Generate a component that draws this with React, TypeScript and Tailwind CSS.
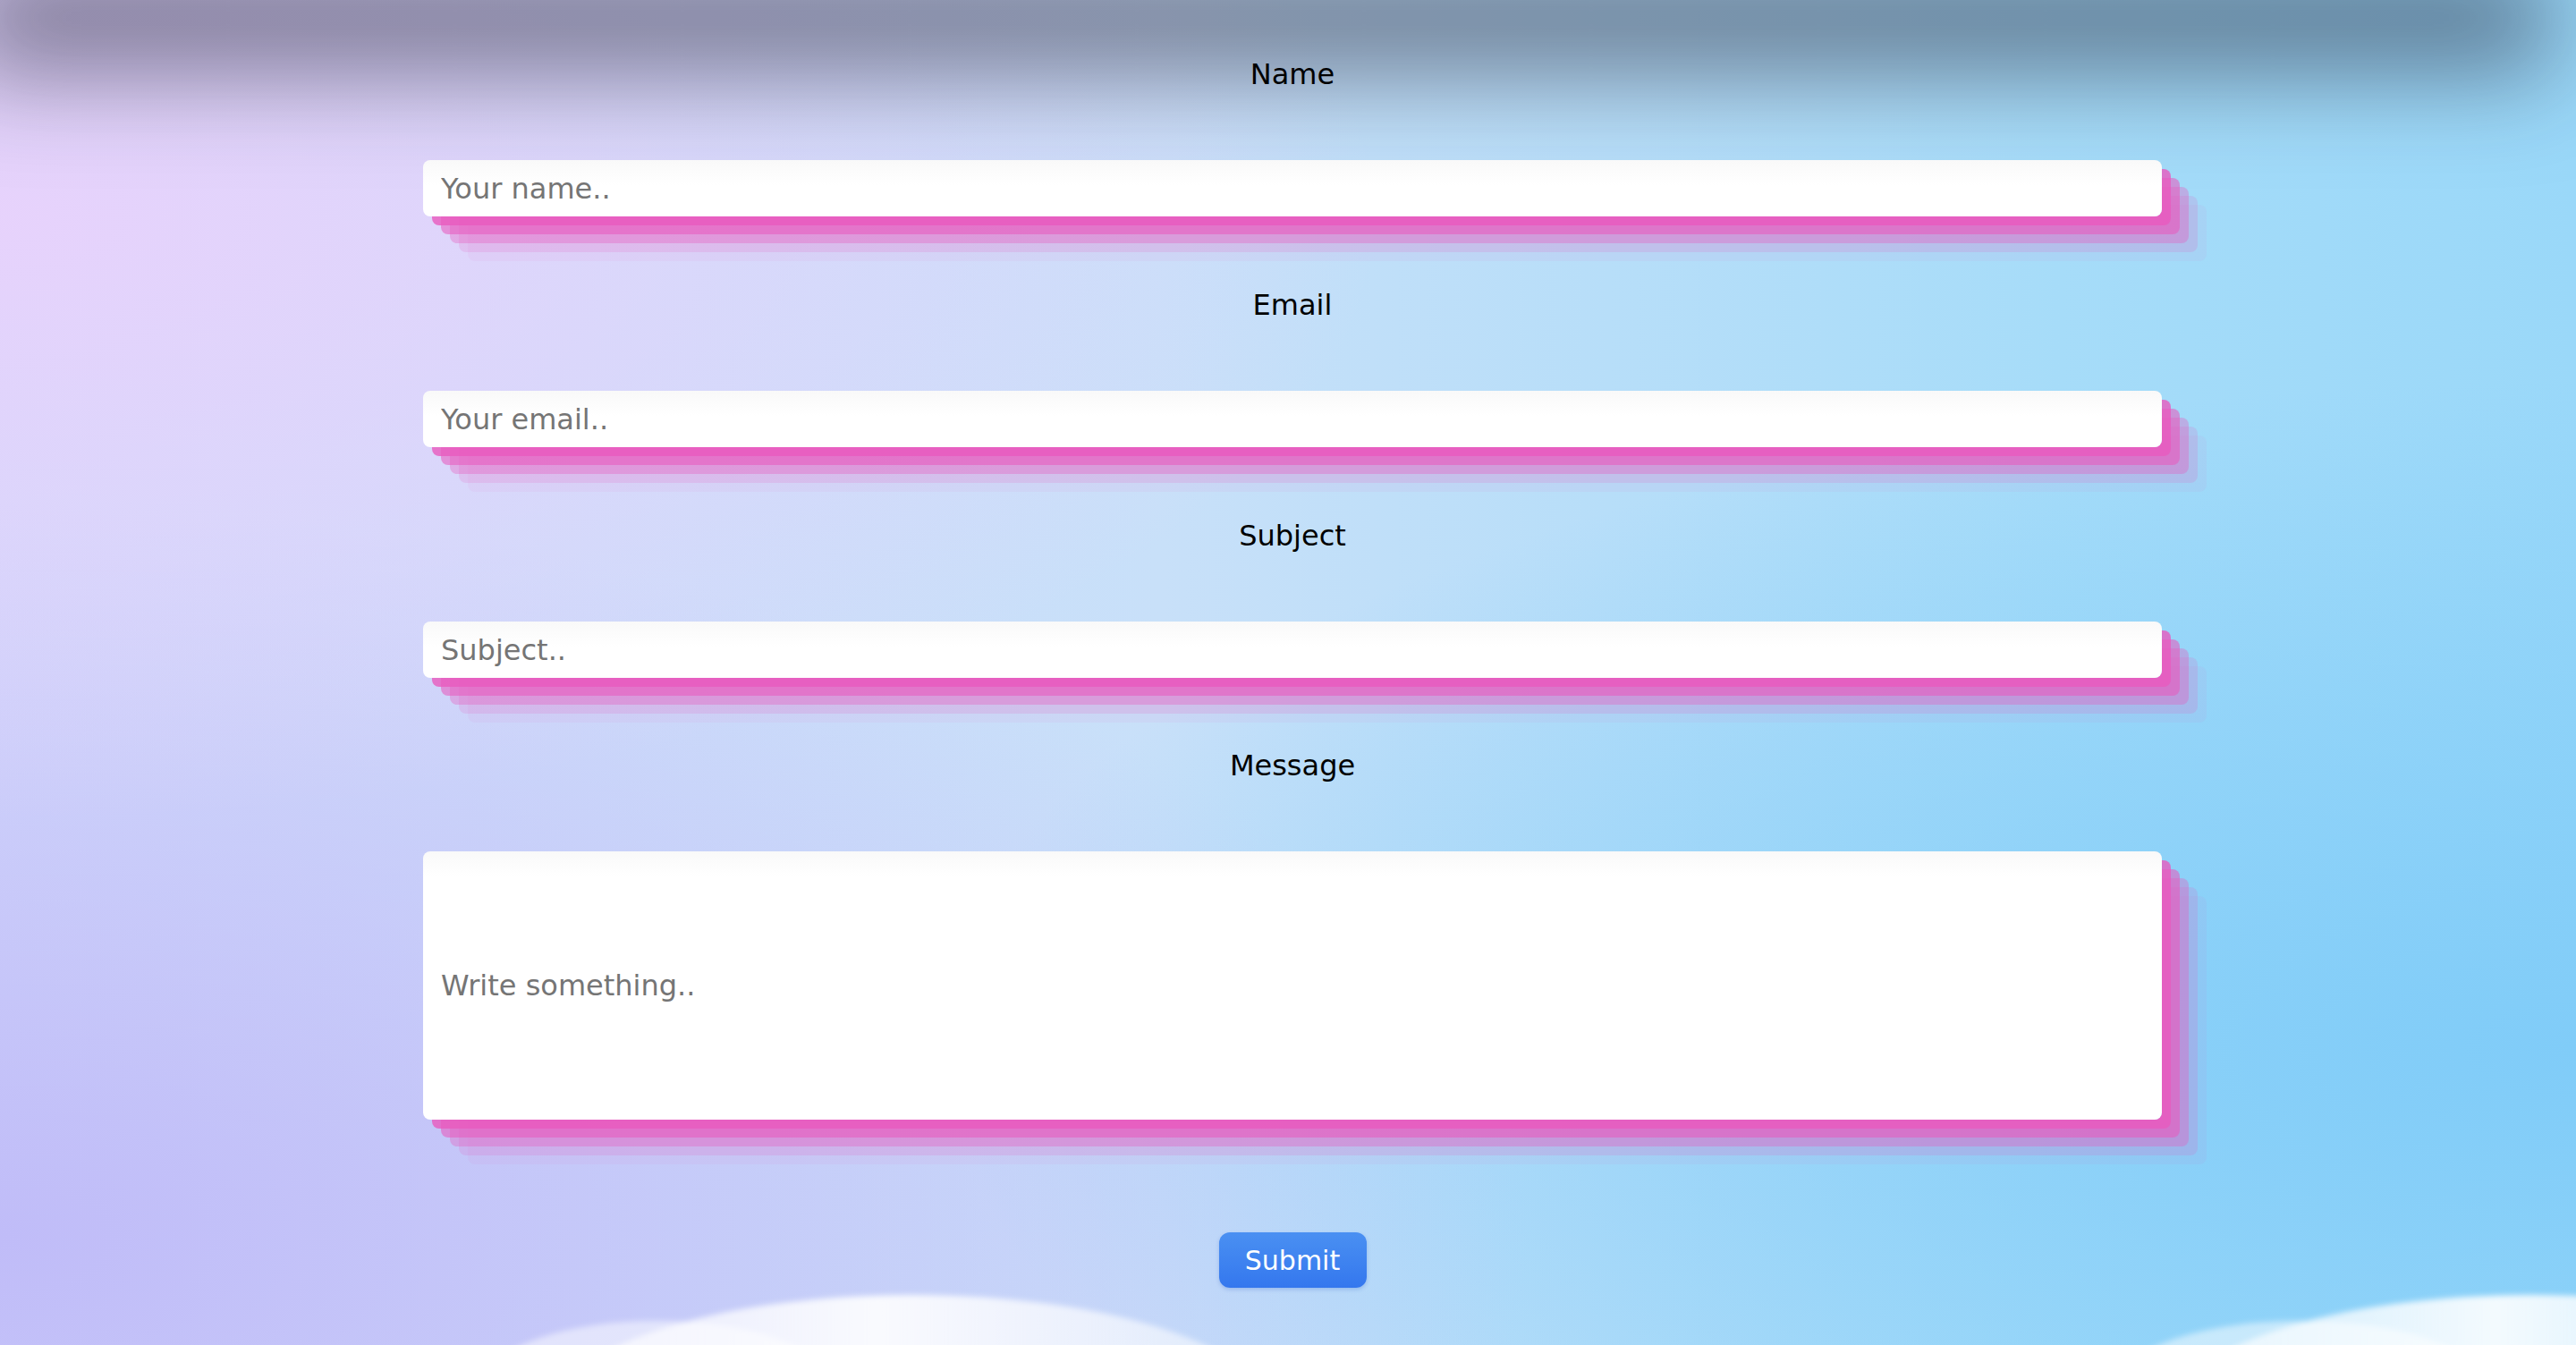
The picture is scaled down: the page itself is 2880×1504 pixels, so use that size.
import { useState } from 'react';

const fields = [
  { name: 'name', label: 'Name', placeholder: 'Your name..' },
  { name: 'email', label: 'Email', placeholder: 'Your email..' },
  { name: 'subject', label: 'Subject', placeholder: 'Subject..' },
];

// stacked pink offsets under every field
const stacked =
  'shadow-[10px_10px_0_rgba(232,90,190,0.8),20px_20px_0_rgba(232,90,190,0.57),30px_30px_0_rgba(232,90,190,0.35),40px_40px_0_rgba(232,90,190,0.17),50px_50px_0_rgba(232,90,190,0.06)]';

const fieldBase =
  'block w-full rounded-[8px] bg-[linear-gradient(#f9f9f9,#ffffff_28px)] px-[20px] text-[32px] text-black outline-none placeholder:text-[#757575] ' +
  stacked;

function Clouds() {
  return (
    <svg
      className="pointer-events-none absolute bottom-0 left-0"
      width="2880"
      height="70"
      viewBox="0 1434 2880 70"
    >
      <defs>
        <filter id="soft" x="-20%" y="-50%" width="140%" height="200%">
          <feGaussianBlur stdDeviation="3" />
        </filter>
        <linearGradient id="cloud" x1="0" y1="0" x2="1" y2="0">
          <stop offset="0" stopColor="#ffffff" stopOpacity="0.55" />
          <stop offset="0.45" stopColor="#ffffff" stopOpacity="0.9" />
          <stop offset="1" stopColor="#ffffff" stopOpacity="0.45" />
        </linearGradient>
      </defs>
      <g filter="url(#soft)">
        <ellipse cx="735" cy="1545" rx="190" ry="68" fill="#ffffff" fillOpacity="0.5" />
        <ellipse cx="1020" cy="1580" rx="400" ry="132" fill="url(#cloud)" />
        <ellipse cx="2573" cy="1545" rx="200" ry="68" fill="#ffffff" fillOpacity="0.5" />
        <ellipse cx="2830" cy="1580" rx="400" ry="132" fill="url(#cloud)" />
      </g>
    </svg>
  );
}

export default function App() {
  const [form, setForm] = useState({ name: '', email: '', subject: '', message: '' });

  return (
    <div className="relative h-[1504px] w-[2880px] overflow-hidden bg-[radial-gradient(ellipse_at_0%_16%,rgba(232,210,252,0.95),rgba(232,210,252,0)_38%),radial-gradient(ellipse_at_0%_92%,rgba(192,188,248,1),rgba(192,188,248,0)_42%),radial-gradient(ellipse_at_100%_78%,rgba(128,204,248,1),rgba(128,204,248,0)_45%),linear-gradient(to_right,#d2d8fb_0%,#c8e0f9_45%,#a6dcf9_80%,#9ad8f9_100%)] font-['DejaVu_Sans',sans-serif]">
      {/* dark band falling from the top edge */}
      <div className="pointer-events-none absolute -top-[120px] -left-[40px] right-[28px] h-[120px] shadow-[0_80px_110px_rgba(30,30,50,0.52)]" />

      <form
        className="relative flex flex-col items-center pl-[10px] pt-[65px]"
        onSubmit={(e) => e.preventDefault()}
      >
        <div className="w-[1944px]">
          {fields.map((f, i) => (
            <div key={f.name} className={i > 0 ? 'mt-[81px]' : ''}>
              <label className="block h-[37px] text-center text-[32px] leading-[37px] text-black">
                {f.label}
              </label>
              <input
                type="text"
                placeholder={f.placeholder}
                value={form[f.name as keyof typeof form]}
                onChange={(e) => setForm({ ...form, [f.name]: e.target.value })}
                className={'mt-[77px] h-[63px] ' + fieldBase}
              />
            </div>
          ))}

          {/* Message */}
          <div className="mt-[80px]">
            <label className="block h-[37px] text-center text-[32px] leading-[37px] text-black">
              Message
            </label>
            <input
              type="text"
              placeholder="Write something.."
              value={form.message}
              onChange={(e) => setForm({ ...form, message: e.target.value })}
              className={'mt-[77px] h-[300px] ' + fieldBase}
            />
          </div>
        </div>

        <button
          type="submit"
          className="mt-[126px] h-[62px] w-[165px] rounded-[12px] bg-[linear-gradient(#4a90f2,#3477ee)] text-[30px] text-white shadow-[0_2px_4px_rgba(40,90,200,0.25)]"
        >
          Submit
        </button>
      </form>

      <Clouds />
    </div>
  );
}
